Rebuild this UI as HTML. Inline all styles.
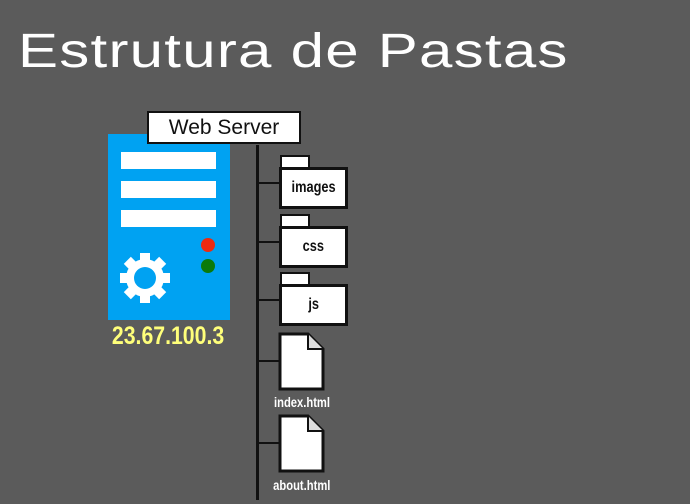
<!DOCTYPE html>
<html><head><style>
body{margin:0;width:690px;height:504px;background:#5b5b5b;position:relative;overflow:hidden;font-family:"Liberation Sans",sans-serif}
.a{position:absolute}
.title{left:18px;top:24px;font-size:48px;color:#fff;white-space:nowrap;transform-origin:0 0;transform:scaleX(1.25);letter-spacing:1px}
.bar{position:absolute;left:121px;width:95px;height:17px;background:#fff}
.tab{position:absolute;background:#fff;border:2px solid #111;width:26px;height:11px}
.fb{position:absolute;background:#fff;border:3px solid #111;width:63px;height:36px;font:bold 16px "Liberation Sans",sans-serif;color:#111;display:flex;align-items:center;justify-content:center}
.fb span{display:inline-block;transform:scaleX(0.8)}
.br{position:absolute;left:258px;width:22px;height:2px;background:#111}
.lbl{position:absolute;width:110px;text-align:center;color:#fff;font-weight:bold;font-size:14px}
.lbl span{display:inline-block;transform:scaleX(0.8)}
</style></head><body>
<div class="a title">Estrutura de Pastas</div>
<div class="a" style="left:108px;top:134px;width:122px;height:186px;background:#00a2f2"></div>
<div class="bar" style="top:152px"></div>
<div class="bar" style="top:181px"></div>
<div class="bar" style="top:210px"></div>
<div class="a" style="left:201px;top:238px;width:14px;height:14px;border-radius:50%;background:#ee2a0f"></div>
<div class="a" style="left:201px;top:259px;width:14px;height:14px;border-radius:50%;background:#0b7a0b"></div>
<svg class="a" style="left:119px;top:252px" width="52" height="52" viewBox="-26 -26 52 52">
<g fill="#fff"><circle r="19"/>
<g id="t"><rect x="-5" y="-25" width="10" height="9"/></g>
<use href="#t" transform="rotate(45)"/><use href="#t" transform="rotate(90)"/><use href="#t" transform="rotate(135)"/><use href="#t" transform="rotate(180)"/><use href="#t" transform="rotate(225)"/><use href="#t" transform="rotate(270)"/><use href="#t" transform="rotate(315)"/></g>
<circle r="11" fill="#00a2f2"/></svg>
<div class="a" style="left:98px;top:322px;width:140px;text-align:center;color:#ffff7a;font-weight:bold;font-size:25px"><span style="display:inline-block;transform:scaleX(0.85)">23.67.100.3</span></div>
<div class="a" style="left:147px;top:111px;width:150px;height:29px;background:#fff;border:2px solid #111;font-size:21px;color:#111;text-align:center;line-height:29px">Web Server</div>
<div class="a" style="left:256px;top:145px;width:3px;height:355px;background:#111"></div>
<div class="br" style="top:182px"></div><div class="br" style="top:241px"></div><div class="br" style="top:299px"></div><div class="br" style="top:360px"></div><div class="br" style="top:442px"></div>
<div class="tab" style="left:280px;top:155px"></div><div class="fb" style="left:279px;top:167px"><span>images</span></div>
<div class="tab" style="left:280px;top:214px"></div><div class="fb" style="left:279px;top:226px"><span>css</span></div>
<div class="tab" style="left:280px;top:272px"></div><div class="fb" style="left:279px;top:284px"><span>js</span></div>
<svg class="a" style="left:277px;top:332px" width="50" height="60"><path d="M3 2 H31 L46 17 V57 H3 Z" fill="#fff" stroke="#111" stroke-width="3"/><path d="M31 2 V17 H46" fill="#ddd" stroke="#111" stroke-width="2"/></svg>
<div class="lbl" style="left:247px;top:394px"><span>index.html</span></div>
<svg class="a" style="left:277px;top:414px" width="50" height="60"><path d="M3 2 H31 L46 17 V57 H3 Z" fill="#fff" stroke="#111" stroke-width="3"/><path d="M31 2 V17 H46" fill="#ddd" stroke="#111" stroke-width="2"/></svg>
<div class="lbl" style="left:247px;top:477px"><span>about.html</span></div>
</body></html>
